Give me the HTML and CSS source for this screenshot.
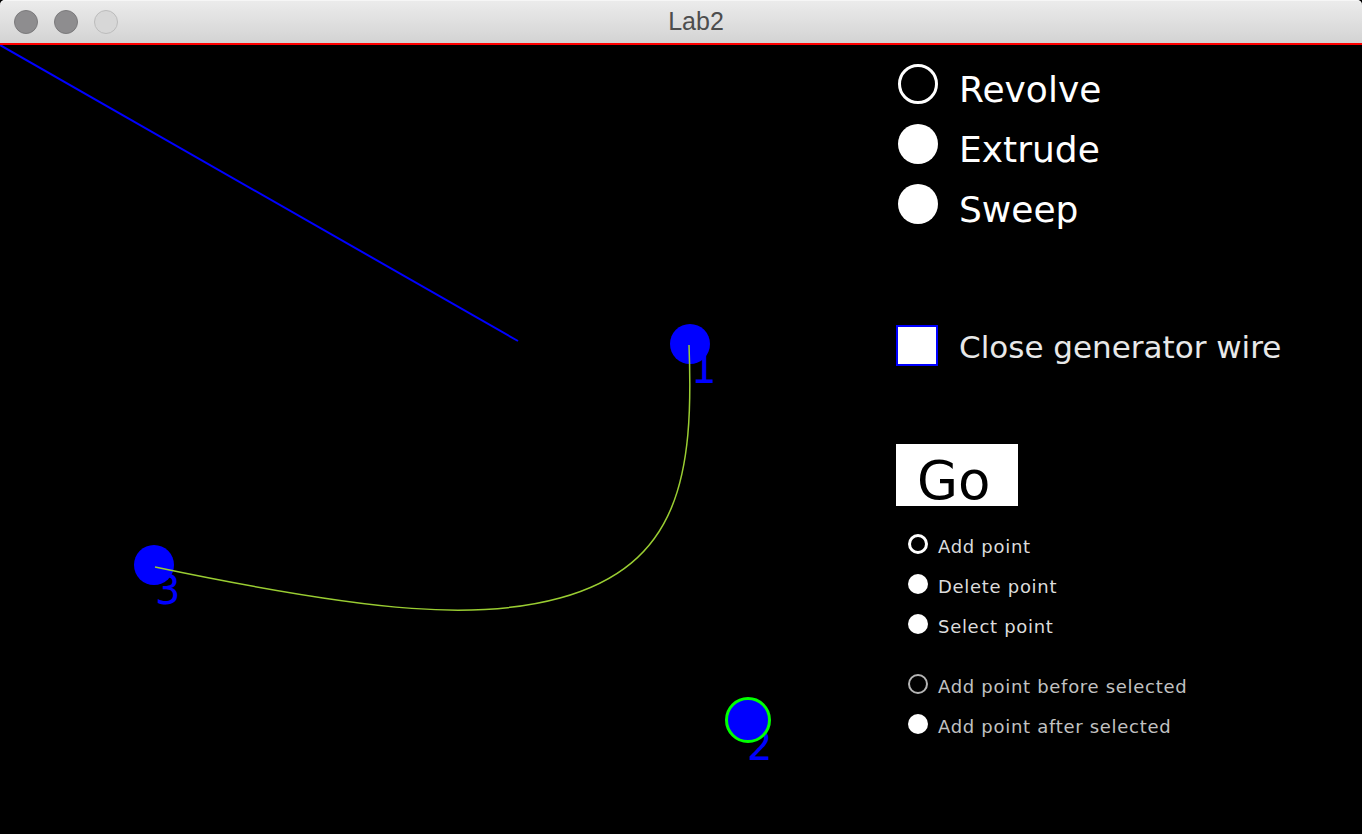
FILE: index.html
```html
<!DOCTYPE html>
<html>
<head>
<meta charset="utf-8">
<title>Lab2</title>
<link rel="stylesheet" href="styles.css">
</head>
<body>
<div class="window">
  <header class="titlebar">
    <div class="lights">
      <span class="light dark"></span>
      <span class="light dark"></span>
      <span class="light pale"></span>
    </div>
    <div class="title">Lab2</div>
  </header>
  <main class="stage">
    <svg class="canvas" viewBox="0 45 1362 789" width="1362" height="789" xmlns="http://www.w3.org/2000/svg">
      <line x1="0" y1="45" x2="518" y2="341" stroke="#0000ff" stroke-width="2"/>
      <g class="labels" font-family="DejaVu Sans, sans-serif" font-size="40" fill="#0000ff">
        <text x="691" y="383">1</text>
        <text x="155" y="604">3</text>
        <text x="747" y="760">2</text>
      </g>
      <circle cx="690" cy="344" r="20" fill="#0000ff"/>
      <circle cx="154" cy="565" r="20" fill="#0000ff"/>
      <circle cx="748" cy="720" r="21.5" fill="#0000ff" stroke="#00ff00" stroke-width="3"/>
      <path d="M689,345 C694,475 680,565 560,598 C480,620 380,614 155,567" fill="none" stroke="#9acd32" stroke-width="1.5"/>
    </svg>
    <section class="panel">
      <div class="big-row">
        <span class="big-radio hollow"></span><span class="big-label">Revolve</span>
      </div>
      <div class="big-row">
        <span class="big-radio filled"></span><span class="big-label">Extrude</span>
      </div>
      <div class="big-row">
        <span class="big-radio filled"></span><span class="big-label">Sweep</span>
      </div>
      <div class="check-row">
        <span class="checkbox"></span><span class="check-label">Close generator wire</span>
      </div>
      <div class="go">Go</div>
      <div class="small-group">
        <div class="small-row"><span class="small-radio hollow"></span><span class="small-label">Add point</span></div>
        <div class="small-row"><span class="small-radio filled"></span><span class="small-label">Delete point</span></div>
        <div class="small-row"><span class="small-radio filled"></span><span class="small-label">Select point</span></div>
      </div>
      <div class="small-group second">
        <div class="small-row"><span class="small-radio hollow dim"></span><span class="small-label dim">Add point before selected</span></div>
        <div class="small-row"><span class="small-radio filled"></span><span class="small-label dim">Add point after selected</span></div>
      </div>
    </section>
  </main>
</div>
</body>
</html>
```

FILE: styles.css
```css
html, body {
  margin: 0;
  padding: 0;
  background: #000;
  width: 1362px;
  height: 834px;
  overflow: hidden;
}

.window {
  display: flex;
  flex-direction: column;
  width: 1362px;
  height: 834px;
}

.titlebar {
  height: 43px;
  border-bottom: 2px solid #ff0000;
  border-radius: 5px 5px 0 0;
  background: linear-gradient(#ececec, #d3d3d3);
  box-shadow: inset 0 1px 0 #f6f6f6;
  display: flex;
  align-items: center;
  position: relative;
}

.lights {
  display: flex;
  gap: 16px;
  padding-left: 14px;
}

.light {
  width: 24px;
  height: 24px;
  box-sizing: border-box;
  border-radius: 50%;
  display: block;
}

.light.dark {
  background: #8e8d8f;
  border: 1px solid #7b7a7c;
}

.light.pale {
  background: #d7d7d7;
  border: 1px solid #bcbcbc;
}

.title {
  position: absolute;
  left: 30px;
  right: 0;
  top: 0;
  bottom: 0;
  display: flex;
  align-items: center;
  justify-content: center;
  font-family: "Liberation Sans", Arial, sans-serif;
  font-size: 25px;
  color: #4d4d4d;
  padding-bottom: 1px;
}

.stage {
  display: grid;
  height: 789px;
}

.stage > * {
  grid-area: 1 / 1;
}

.canvas {
  display: block;
}

.panel {
  margin-left: 896px;
  padding-top: 19px;
  display: flex;
  flex-direction: column;
  align-items: flex-start;
  font-family: "DejaVu Sans", sans-serif;
}

.big-row {
  display: flex;
  align-items: center;
  height: 40px;
  margin-bottom: 20px;
  gap: 21px;
}

.big-radio {
  width: 40px;
  height: 40px;
  box-sizing: border-box;
  border-radius: 50%;
  margin-left: 2px;
}

.big-radio.hollow {
  border: 3px solid #fff;
}

.big-radio.filled {
  background: #fff;
}

.big-label {
  color: #fff;
  font-size: 36px;
  line-height: 40px;
  padding-top: 12px;
}

.check-row {
  margin-top: 80px;
  display: flex;
  align-items: center;
  gap: 21px;
  height: 42px;
}

.checkbox {
  width: 42px;
  height: 41px;
  box-sizing: border-box;
  border: 2px solid #0000ff;
  background: #fff;
}

.check-label {
  color: #e8e8e8;
  font-size: 31px;
  line-height: 42px;
  padding-top: 4px;
}

.go {
  margin-top: 78px;
  width: 122px;
  height: 62px;
  background: #fff;
  color: #000;
  font-size: 53px;
  line-height: 50px;
  padding-left: 21px;
  padding-top: 12px;
  box-sizing: border-box;
}

.small-group {
  margin-top: 28px;
  display: flex;
  flex-direction: column;
  gap: 20px;
}

.small-group.second {
  margin-top: 40px;
}

.small-row {
  display: flex;
  align-items: center;
  height: 20px;
  gap: 10px;
}

.small-radio {
  width: 20px;
  height: 20px;
  box-sizing: border-box;
  border-radius: 50%;
  margin-left: 12px;
}

.small-radio.hollow {
  border: 3px solid #fff;
}

.small-radio.hollow.dim {
  border: 2px solid #b5b5b5;
}

.small-radio.filled {
  background: #fff;
}

.small-label {
  color: #dcdcdc;
  font-size: 18px;
  letter-spacing: 0.7px;
  line-height: 20px;
  padding-top: 6px;
}

.small-label.dim {
  color: #c2c2c2;
}
```
